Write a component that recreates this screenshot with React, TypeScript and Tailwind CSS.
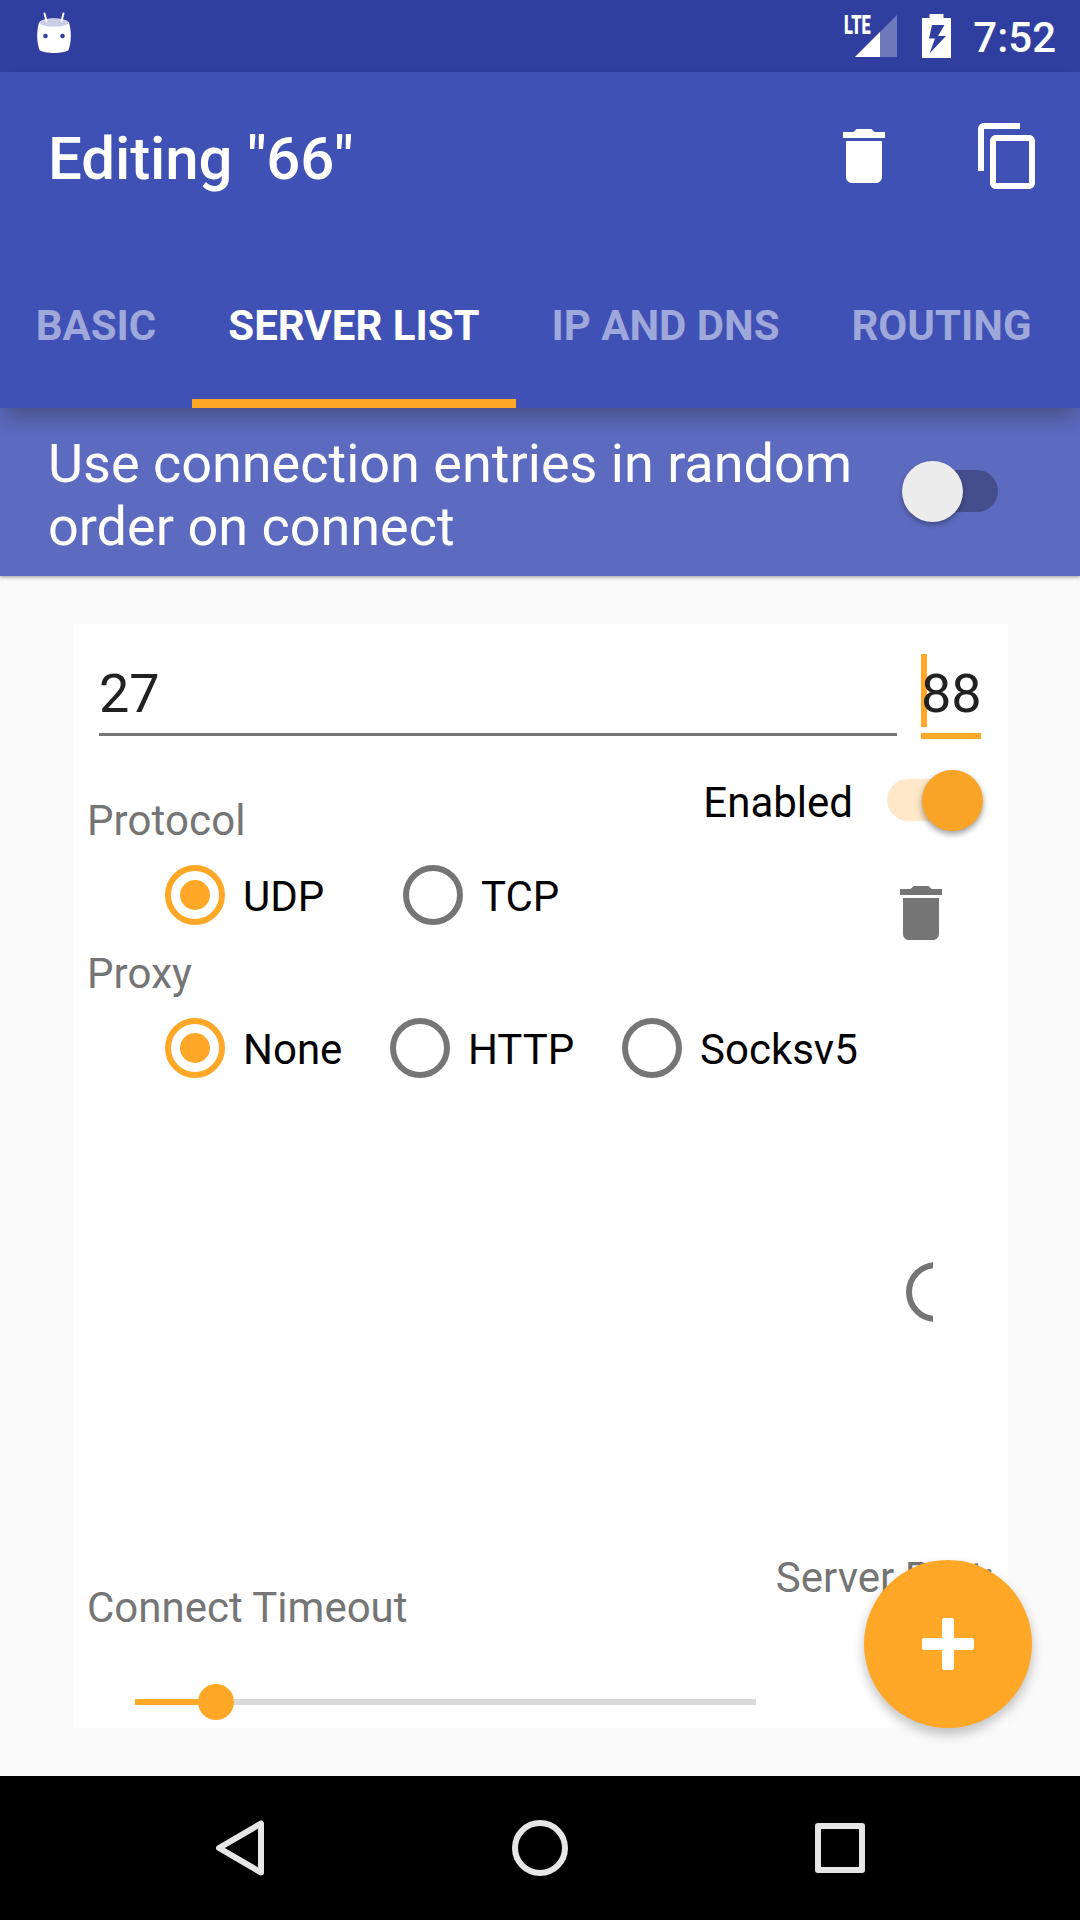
import React from "react";
import { MdContentCopy, MdDelete } from "react-icons/md";

function StatusBar() {
  return (
    <div className="flex h-[72px] items-start bg-[#303F9F] text-white">
      <svg className="ml-[36px] mt-[12px] h-[42px] w-[36px]" viewBox="0 0 36 42">
        <path d="M3 10.500c6-5.500 24-5.500 30 0 2.500 8 2.500 19-.5 27.500-4.500 4-24.500 4-29 0C.5 30 .5 19 3 10.500z" fill="#fff" />
        <ellipse cx="18" cy="10.600" rx="14.500" ry="4" fill="#CBCDE6" />
        <path d="M8.500 1.500 10.500 9M27.500 1.500 25.500 9" stroke="#fff" strokeWidth="2" strokeLinecap="round" />
        <circle cx="9.500" cy="24" r="2.300" fill="#303F9F" />
        <circle cx="26.500" cy="24" r="2.300" fill="#303F9F" />
      </svg>
      <div className="relative ml-auto mr-[25px] mt-[15px] h-[42px] w-[42px]">
        <svg className="h-[42px] w-[42px]" viewBox="0 0 42 42">
          <path d="M42 0V42H0z" fill="#fff" fillOpacity=".3" />
          <path d="M25 17V42H0z" fill="#fff" />
        </svg>
        <span className="absolute -left-[11.500px] top-0 origin-left scale-x-[0.63] text-[26px] font-black leading-[20px]">LTE</span>
      </div>
      <svg className="mr-[22px] mt-[14px] h-[44px] w-[29px]" viewBox="0 0 29 44">
        <path fillRule="evenodd" fill="#fff" d="M7.500 0H21.500V4H29V44H0V4H7.500zM10 11 7 24.500H13L7.500 39.500 24 22H16L22.500 11z" />
      </svg>
      <span className="mr-[24px] mt-[13px] text-[42px] font-medium leading-[50px]">7:52</span>
    </div>
  );
}

function Tab({ label, active, width }: { label: string; active?: boolean; width: string }) {
  return (
    <div className={`${width} flex shrink-0 flex-col`}>
      <div className={`flex h-[147px] items-center justify-center whitespace-nowrap text-[42px] font-bold leading-[50px] ${active ? "text-white" : "text-[#9FA8DA]"}`}>
        {label}
      </div>
      <div className={`h-[9px] ${active ? "bg-[#FFA726]" : ""}`} />
    </div>
  );
}

function AppBar() {
  return (
    <header className="relative z-10 h-[336px] bg-[#3F51B5] text-white shadow-[0_13px_18px_-4px_rgba(25,20,0,0.3)]">
      <div className="flex h-[168px] items-center pl-[48px] pr-[36px]">
        <h1 className="mt-[6px] flex-1 text-[60px] font-medium leading-[70px] tracking-[-0.1px]">Editing "66"</h1>
        <MdDelete className="mr-[72px] size-[72px]" />
        <MdContentCopy className="size-[72px]" />
      </div>
      <nav className="mt-[12px] flex">
        <Tab label="BASIC" width="w-[192px]" />
        <Tab label="SERVER LIST" active width="w-[324px]" />
        <Tab label="IP AND DNS" width="w-[299px]" />
        <Tab label="ROUTING" width="w-[253px]" />
      </nav>
    </header>
  );
}

function Banner() {
  return (
    <div className="relative flex h-[168px] items-start bg-[#5C6BC0] pl-[48px] text-white shadow-[0_1px_4px_rgba(0,0,0,0.4)]">
      <p className="mt-[24px] w-[854px] text-[54px] leading-[63px]">
        Use connection entries in random
        <br />
        order on connect
      </p>
      <div className="relative mt-[53px] h-[61px] w-[96px]">
        <div className="ml-[24px] mt-[9px] h-[42px] w-[72px] rounded-full bg-[#444E8C]" />
        <div className="absolute left-0 top-0 size-[61px] rounded-full bg-[#ECECEC] shadow-[0_3px_5px_rgba(0,0,0,0.3)]" />
      </div>
    </div>
  );
}

function Radio({ label, checked }: { label: string; checked?: boolean }) {
  return (
    <div className="flex h-[60px] gap-[18px]">
      <div className={`flex size-[60px] items-center justify-center rounded-full border-[6px] ${checked ? "border-[#FFA726]" : "border-[#757575]"}`}>
        {checked && <div className="size-[30px] rounded-full bg-[#FFA726]" />}
      </div>
      <span className="mt-[2px] text-[42px] leading-[60px] text-black">{label}</span>
    </div>
  );
}

function ServerCard() {
  return (
    <section className="ml-[73px] mt-[48px] flex h-[1104px] w-[935px] flex-col bg-white pt-[30px]">
      <div className="flex h-[85px] items-start gap-[24px] pl-[26px] text-[54px] text-[#212121]">
        <div className="flex h-[82px] w-[798px] items-center border-b-[3px] border-[#757575] leading-[63px]">27</div>
        <div className="relative flex h-[85px] w-[60px] items-center border-b-[6px] border-[#FFA726] leading-[63px]">
          <div className="absolute left-0 top-0 h-[73px] w-[6px] bg-[#FFA726]" />
          <span className="relative">88</span>
        </div>
      </div>

      <div className="flex h-[126px] items-start pl-[14px] text-[42px] leading-[50px]">
        <span className="mt-[57px] flex-1 tracking-[0.1px] text-[#757575]">Protocol</span>
        <span className="mt-[39px] text-black">Enabled</span>
        <div className="relative ml-[34px] mr-[25px] mt-[31px] h-[61px] w-[96px]">
          <div className="mt-[9px] h-[42px] w-[72px] rounded-full bg-[#FFE8C9]" />
          <div className="absolute right-0 top-0 size-[61px] rounded-full bg-[#F9A426] shadow-[0_3px_6px_rgba(0,0,0,0.4)]" />
        </div>
      </div>

      <div className="flex h-[84px] items-start pl-[92px]">
        <div className="w-[238px]"><Radio label="UDP" checked /></div>
        <Radio label="TCP" />
        <MdDelete className="ml-auto mr-[51px] mt-[12px] size-[72px] text-[#757575]" />
      </div>

      <span className="h-[69px] pl-[14px] text-[42px] leading-[50px] tracking-[0.1px] text-[#757575]">Proxy</span>
      <div className="flex h-[244px] items-start pl-[92px]">
        <div className="w-[225px]"><Radio label="None" checked /></div>
        <div className="w-[232px]"><Radio label="HTTP" /></div>
        <Radio label="Socksv5" />
      </div>

      <div className="ml-[833px] h-[60px] w-[27px] overflow-hidden">
        <div className="size-[60px] rounded-full border-[6px] border-[#757575]" />
      </div>

      <div className="mt-auto flex h-[175px] items-start justify-between pl-[14px] pr-[14px] text-[42px] leading-[50px] text-[#757575]">
        <div className="mt-[30px]">
          <div>Connect Timeout</div>
          <div className="ml-[48px] mt-[51px] flex h-[36px] w-[621px] items-center">
            <div className="h-[6px] w-[63px] bg-[#FFA726]" />
            <div className="size-[36px] rounded-full bg-[#FFA726]" />
            <div className="h-[6px] flex-1 bg-[#DADADA]" />
          </div>
        </div>
        <span className="whitespace-nowrap">Server Port:</span>
      </div>
    </section>
  );
}

function NavigationBar() {
  return (
    <div className="flex h-[144px] items-center justify-center gap-[228px] bg-black">
      <svg className="size-[72px]" viewBox="0 0 72 72" fill="none" stroke="#E6E6E6" strokeWidth="6" strokeLinejoin="round">
        <path d="M57 11.500V60.500L15 36z" />
      </svg>
      <svg className="size-[72px]" viewBox="0 0 72 72" fill="none" stroke="#E6E6E6" strokeWidth="6">
        <circle cx="36" cy="36" r="25" />
      </svg>
      <svg className="size-[72px]" viewBox="0 0 72 72" fill="none" stroke="#E6E6E6" strokeWidth="6" strokeLinejoin="round">
        <rect x="14" y="14" width="44" height="44" />
      </svg>
    </div>
  );
}

export default function App() {
  return (
    <div className="relative flex h-[1920px] w-[1080px] flex-col overflow-hidden bg-[#FAFAFA] font-[Roboto,sans-serif]">
      <StatusBar />
      <AppBar />
      <Banner />
      <ServerCard />
      <div className="mt-auto">
        <NavigationBar />
      </div>
      <button className="absolute bottom-[192px] right-[48px] z-20 flex size-[168px] items-center justify-center rounded-full bg-[#FFA726] shadow-[0_6px_12px_rgba(0,0,0,0.25)]">
        <svg className="size-[52px]" viewBox="0 0 52 52" fill="#fff">
          <rect x="20" width="12" height="52" rx="2" />
          <rect y="20" width="52" height="12" rx="2" />
        </svg>
      </button>
    </div>
  );
}
